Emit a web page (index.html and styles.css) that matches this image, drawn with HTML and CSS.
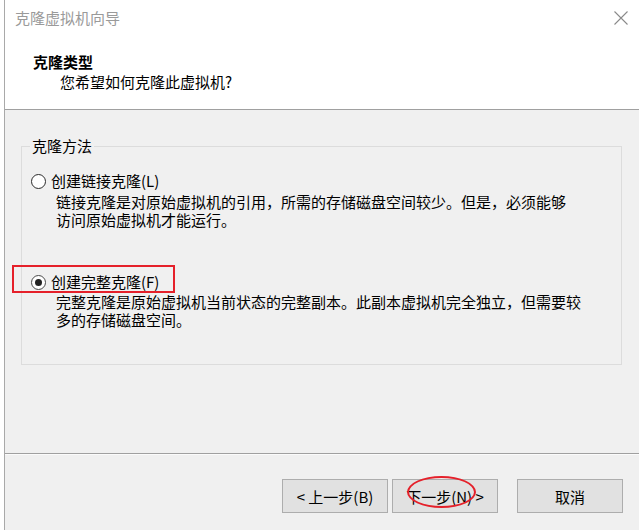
FILE: index.html
```html
<!DOCTYPE html>
<html lang="zh-CN">
<head>
<meta charset="utf-8">
<title>克隆虚拟机向导</title>
<link rel="stylesheet" href="styles.css">
</head>
<body>
<div class="window">
  <div class="top">
    <div class="titlebar">
      <span class="title">克隆虚拟机向导</span>
      <svg class="close" width="14" height="14" viewBox="0 0 14 14"><path d="M0.5 0.5 L13.5 13.5 M13.5 0.5 L0.5 13.5" stroke="#8a8a8a" stroke-width="1.1" fill="none"/></svg>
    </div>
    <div class="header">
      <div class="heading">克隆类型</div>
      <div class="subheading">您希望如何克隆此虚拟机?</div>
    </div>
  </div>
  <div class="body">
    <fieldset class="group">
      <legend class="legend">克隆方法</legend>
      <div class="option">
        <span class="radio"></span>
        <span class="label">创建链接克隆(L)</span>
      </div>
      <div class="desc">
        <div class="desc-line">链接克隆是对原始虚拟机的引用，所需的存储磁盘空间较少。但是，必须能够</div>
        <div class="desc-line">访问原始虚拟机才能运行。</div>
      </div>
      <div class="option option-second">
        <span class="radio checked"></span>
        <span class="label">创建完整克隆(F)</span>
        <span class="mark-box"></span>
      </div>
      <div class="desc desc-second">
        <div class="desc-line">完整克隆是原始虚拟机当前状态的完整副本。此副本虚拟机完全独立，但需要较</div>
        <div class="desc-line">多的存储磁盘空间。</div>
      </div>
    </fieldset>
  </div>
  <div class="footer">
    <button class="btn">&lt; 上一步(B)</button>
    <button class="btn btn-next">下一步(N) &gt;<span class="mark-ellipse"></span></button>
    <button class="btn btn-cancel">取消</button>
  </div>
</div>
</body>
</html>
```

FILE: styles.css
```css
html, body {
  margin: 0;
  padding: 0;
  background: #ffffff;
  overflow: hidden;
}
body {
  width: 639px;
  height: 530px;
  font-family: "Noto Sans CJK SC", "Noto Sans", sans-serif;
  font-size: 15px;
  color: #000;
}
.window {
  margin-left: 4px;
  border-left: 1px solid #a9a9a9;
  height: 530px;
  background: #f0f0f0;
}
.top {
  background: #ffffff;
  height: 109px;
  border-bottom: 1px solid #a0a0a0;
}
.titlebar {
  display: flex;
  justify-content: space-between;
  align-items: center;
  height: 20px;
  padding: 8px 11px 0 10px;
}
.title {
  color: #9a9a9a;
  font-size: 15px;
  line-height: 20px;
}
.close {
  display: block;
}
.header {
  padding-top: 24px;
  padding-left: 28px;
}
.heading {
  font-weight: bold;
  line-height: 20px;
}
.subheading {
  line-height: 20px;
  padding-left: 27px;
}
.body {
  height: 343px;
  padding-top: 26px;
  box-sizing: border-box;
  background: #f0f0f0;
}
.group {
  box-sizing: border-box;
  width: 601px;
  margin: 0 0 0 16px;
  padding: 15px 0 35px 0;
  border: 1px solid #dcdcdc;
  min-width: 0;
}
.legend {
  margin-left: 8px;
  padding: 0 2px;
  line-height: 20px;
}
.option {
  position: relative;
  display: flex;
  align-items: center;
  gap: 5px;
  height: 20px;
  margin-left: 9px;
}
.option-second {
  margin-top: 43px;
}
.radio {
  position: relative;
  box-sizing: border-box;
  width: 15px;
  height: 15px;
  border: 1px solid #2b2b2b;
  border-radius: 50%;
  background: #fff;
}
.radio.checked {
  border-color: #4a4a4a;
}
.radio.checked::after {
  content: "";
  position: absolute;
  left: 3px;
  top: 3px;
  width: 7px;
  height: 7px;
  border-radius: 50%;
  background: #222;
}
.label {
  line-height: 20px;
}
.desc {
  margin: 2px 0 0 34px;
  white-space: nowrap;
}
.desc-line {
  height: 18px;
  line-height: 18px;
}
.desc-second {
  margin-top: 1px;
}
.mark-box {
  position: absolute;
  left: -19px;
  top: -7px;
  width: 163px;
  height: 28px;
  box-sizing: border-box;
  border: 2px solid #e5202a;
}
.footer {
  border-top: 1px solid #a0a0a0;
  box-shadow: inset 0 1px 0 #fbfbfb;
  padding: 25px 0 0 277px;
  display: flex;
}
.btn {
  position: relative;
  box-sizing: border-box;
  width: 106px;
  height: 34px;
  margin: 0;
  padding: 0;
  border: 1px solid #adadad;
  background: #e1e1e1;
  font-family: "Noto Sans CJK SC", "Noto Sans", sans-serif;
  font-size: 15px;
  color: #000;
}
.btn-next {
  margin-left: 4px;
}
.btn-cancel {
  margin-left: 19px;
}
.mark-ellipse {
  position: absolute;
  left: 14px;
  top: -4px;
  width: 69px;
  height: 32px;
  box-sizing: border-box;
  border: 2px solid #e5202a;
  border-radius: 50%;
}
```
